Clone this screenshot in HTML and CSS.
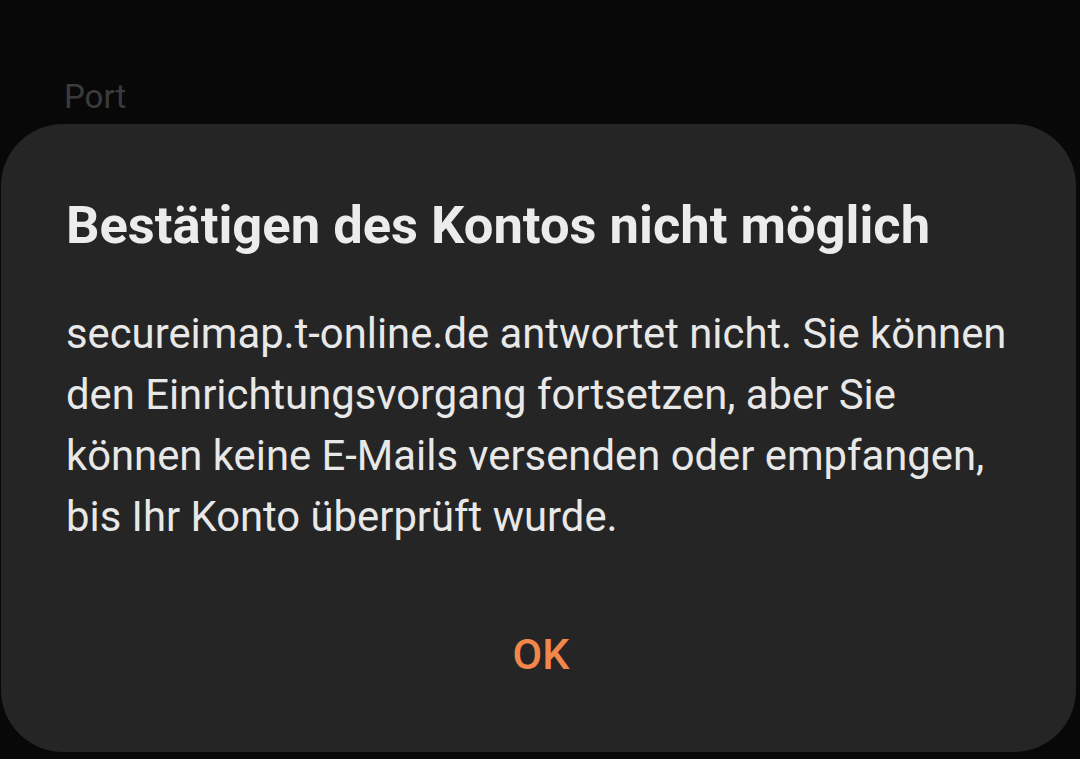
FILE: index.html
```html
<!DOCTYPE html>
<html lang="de">
<head>
    <meta charset="UTF-8">
    <meta name="viewport" content="width=device-width, initial-scale=1.0">
    <title>Konto</title>
    <link rel="stylesheet" href="styles.css">
</head>
<body>

    <div class="screen">
        <div class="field-label">Port</div>

        <div class="dialog">
            <h2 class="dialog-title">Bestätigen des Kontos nicht möglich</h2>
            <p class="dialog-text">secureimap.t-online.de antwortet nicht. Sie können den Einrichtungsvorgang fortsetzen, aber Sie können keine E-Mails versenden oder empfangen, bis Ihr Konto überprüft wurde.</p>
            <div class="dialog-actions">
                <button class="dialog-btn">OK</button>
            </div>
        </div>
    </div>

</body>
</html>
```

FILE: styles.css
```css
body {
    margin: 0;
    font-family: 'Roboto', 'Noto Sans', sans-serif;
    background-color: #080808;
    height: 759px;
    overflow: hidden;
}

.screen {
    display: flex;
    flex-direction: column;
}

.field-label {
    color: #3b3b3b;
    font-size: 33px;
    line-height: 40px;
    padding: 77px 0 0 64px;
    height: 124px;
    box-sizing: border-box;
}

.dialog {
    margin: 0 4px 0 1px;
    height: 628px;
    box-sizing: border-box;
    background-color: #252525;
    border-radius: 62px;
    padding: 70px 40px 0 65px;
    display: flex;
    flex-direction: column;
}

.dialog-title {
    margin: 0;
    color: #ececec;
    font-size: 52.5px;
    font-weight: 700;
    line-height: 62px;
    white-space: nowrap;
}

.dialog-text {
    margin: 47px 0 0 0;
    color: #e8e8e8;
    font-size: 41.8px;
    line-height: 61px;
}

.dialog-actions {
    display: flex;
    justify-content: center;
    margin: 82px 20px 0 0;
}

.dialog-btn {
    background: none;
    border: none;
    color: #f2874b;
    font-family: 'Roboto', sans-serif;
    font-size: 43px;
    font-weight: 500;
    line-height: 50px;
    padding: 0;
    cursor: pointer;
}
```
